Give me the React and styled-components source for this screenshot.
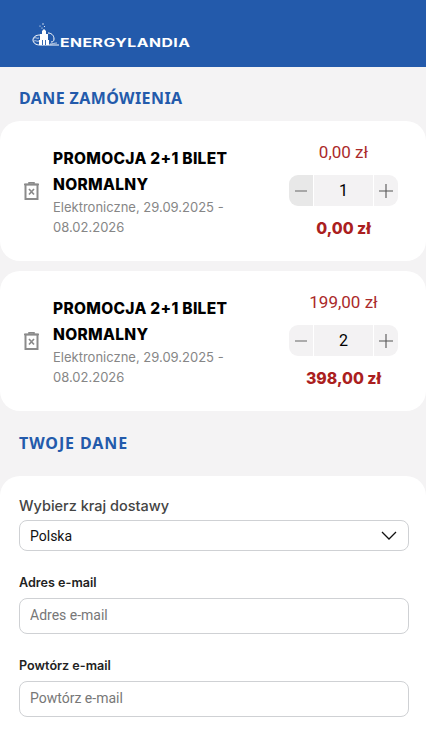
import React from "react";
import styled, { createGlobalStyle } from "styled-components";

const Global = createGlobalStyle`
  html, body { margin: 0; padding: 0; background: #f4f3f4; }
  body { font-family: Inter, "Liberation Sans", sans-serif; overflow: hidden; }
  * { box-sizing: border-box; }
`;
const Page = styled.div`
  width: 426px;
  height: 739px;
  overflow: hidden;
  display: flex;
  flex-direction: column;
`;
const Header = styled.header`
  height: 67px;
  flex: none;
  background: #235aab;
  display: flex;
  align-items: flex-start;
  padding: 23px 0 0 32px;
`;
const LogoText = styled.span`
  font: 700 11.7px/1 Inter, sans-serif;
  color: #fff;
  letter-spacing: 0.35px;
  margin: 15px 0 0 -1px;
  transform: scaleX(1.35);
  transform-origin: left center;
`;
const SectionTitle = styled.h2`
  margin: 0;
  padding: ${(p) => p.$pad};
  font: 700 16px/22px "Noto Sans", sans-serif;
  color: #235aab;
  letter-spacing: ${(p) => p.$spacing};
`;
const Card = styled.section`
  height: 140px;
  flex: none;
  margin-bottom: 10px;
  background: #fff;
  border-radius: 20px;
  display: flex;
  align-items: center;
  padding: 0 28px 0 24px;
`;
const Trash = styled.svg`
  width: 15px;
  height: 18px;
  flex: none;
  margin-right: 14px;
`;
const Info = styled.div`
  width: 190px;
  flex: none;
  margin-top: 1px;
`;
const Name = styled.div`
  font: 800 15.5px/26px Inter, sans-serif;
  color: #000;
  letter-spacing: 0.3px;
`;
const Meta = styled.div`
  font: 400 13px/20px Inter, sans-serif;
  color: #868686;
  margin-top: -1px;
`;
const Side = styled.div`
  margin-left: auto;
  width: 109px;
  display: flex;
  flex-direction: column;
  align-items: center;
`;
const Price = styled.div`
  font: 400 17px/18px Roboto, sans-serif;
  color: #ab2a2a;
  height: 18px;
  margin-bottom: 14px;
`;
const Total = styled.div`
  font: 800 15.8px/20px Inter, sans-serif;
  color: #ab1f1f;
  margin-top: 13px;
`;
const Stepper = styled.div`
  width: 109px;
  height: 31px;
  display: grid;
  grid-template-columns: 24px 1fr 24px;
  gap: 1px;
  border-radius: 9px;
  overflow: hidden;
`;
const StepButton = styled.div`
  background: ${(p) => (p.$off ? "#e8e8e8" : "#f3f2f3")};
  display: flex;
  align-items: center;
  justify-content: center;
  color: #555;
`;
const Qty = styled.div`
  background: #f3f2f3;
  font: 400 16px/31px Roboto, sans-serif;
  color: #000;
  text-align: center;
`;
const Panel = styled.section`
  flex: 1;
  background: #fff;
  border-radius: 20px 20px 0 0;
  padding: 20px 17px 0 19px;
`;
const CountryLabel = styled.label`
  display: block;
  font: 500 14.5px/20px Inter, sans-serif;
  color: #444;
  margin-bottom: 4px;
`;
const Select = styled.div`
  height: 31px;
  border: 1px solid #cfd1d4;
  border-radius: 8px;
  display: flex;
  align-items: center;
  justify-content: space-between;
  padding: 0 11px 0 10px;
  font: 400 14px/1 Roboto, sans-serif;
  color: #111;
  margin-bottom: 24px;
`;
const FieldLabel = styled.label`
  display: block;
  font: 600 12.6px/16px Inter, sans-serif;
  color: #222;
  margin-bottom: 7px;
`;
const Input = styled.input`
  display: block;
  width: 100%;
  height: 36px;
  border: 1px solid #cfd1d4;
  border-radius: 8px;
  padding: 0 10px 2px;
  font: 400 14px/1 Roboto, sans-serif;
  margin-bottom: 24px;
  outline: none;
  &::placeholder { color: #777; opacity: 1; }
`;

const LogoMark = () => (
  <svg width="29" height="25" viewBox="0 0 29 25" fill="none" style={{ flex: "none" }}>
    <g fill="#fff">
      <circle cx="11" cy="1" r=".7" /><circle cx="8" cy="3" r=".6" /><circle cx="12.5" cy="3.5" r=".6" /><circle cx="10" cy="5" r=".6" />
      <path d="M12 6l2 2v3h2v6h1v5H7v-5h1v-6h2V8z" />
    </g>
    <path d="M8 12c-4 0-7 2-7 5 0 3 3 5 7 5h19" stroke="#fff" strokeWidth="1" />
    <path d="M16 10c3 0 6 2 6 6 0 2-1 3-3 3" stroke="#fff" strokeWidth="1" />
    <path d="M2 15c2-1 3 1 5 0M2 18c2-1 3 1 5 0M18 21c3 0 4-1 7-1" stroke="#fff" strokeWidth=".7" />
    <path d="M10.5 17v5M13.5 17v5" stroke="#235aab" strokeWidth=".9" />
  </svg>
);
const TrashIcon = () => (
  <Trash viewBox="0 0 15 18" fill="none" stroke="#8b8b8b">
    <path d="M0 2.5h15M5 2.5V.8h5v1.700" strokeWidth="1.5" />
    <rect x="1.5" y="2.5" width="12" height="14.5" strokeWidth="2" />
    <path d="M5 7l5 5.5M10 7l-5 5.5" strokeWidth="1.7" />
  </Trash>
);
const Minus = () => (
  <svg width="14" height="14" viewBox="0 0 14 14"><path d="M1 7h12" stroke="#666" strokeWidth="1.1" /></svg>
);
const Plus = () => (
  <svg width="14" height="14" viewBox="0 0 14 14"><path d="M0 7h14M7 0v14" stroke="#555" strokeWidth="1.1" /></svg>
);

const items = [
  { price: "0,00 zł", qty: 1, total: "0,00 zł", off: true },
  { price: "199,00 zł", qty: 2, total: "398,00 zł", off: false },
];

export default function App() {
  return (
    <Page>
      <Global />
      <Header>
        <LogoMark />
        <LogoText>ENERGYLANDIA</LogoText>
      </Header>
      <SectionTitle $pad="20px 19px 12px" $spacing="0.4px">DANE ZAMÓWIENIA</SectionTitle>
      {items.map((it) => (
        <Card key={it.price}>
          <TrashIcon />
          <Info>
            <Name>PROMOCJA 2+1 BILET NORMALNY</Name>
            <Meta>Elektroniczne, 29.09.2025 - 08.02.2026</Meta>
          </Info>
          <Side>
            <Price>{it.price}</Price>
            <Stepper>
              <StepButton $off={it.off}><Minus /></StepButton>
              <Qty>{it.qty}</Qty>
              <StepButton><Plus /></StepButton>
            </Stepper>
            <Total>{it.total}</Total>
          </Side>
        </Card>
      ))}
      <SectionTitle $pad="11px 19px 22px" $spacing="0.9px">TWOJE DANE</SectionTitle>
      <Panel>
        <CountryLabel>Wybierz kraj dostawy</CountryLabel>
        <Select>
          Polska
          <svg width="16" height="9" viewBox="0 0 16 9" fill="none"><path d="M1 1l7 7 7-7" stroke="#111" strokeWidth="1.3" /></svg>
        </Select>
        <FieldLabel>Adres e-mail</FieldLabel>
        <Input placeholder="Adres e-mail" />
        <FieldLabel>Powtórz e-mail</FieldLabel>
        <Input placeholder="Powtórz e-mail" />
      </Panel>
    </Page>
  );
}
